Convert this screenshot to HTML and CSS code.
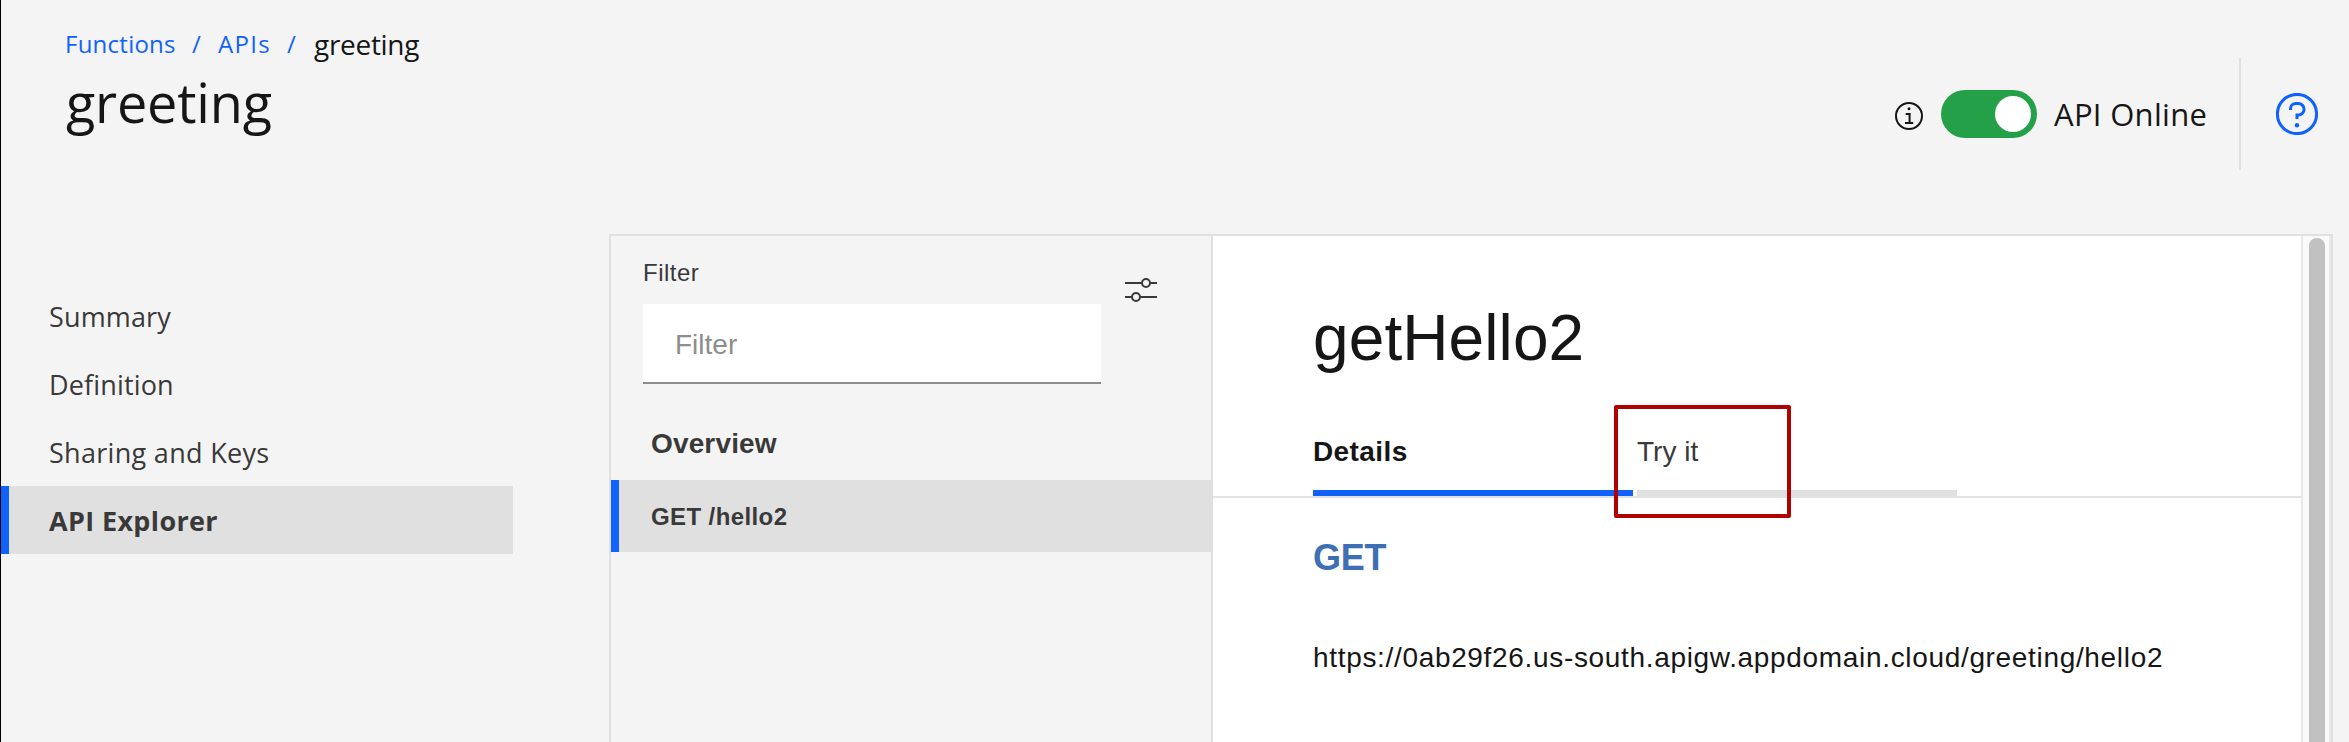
FILE: index.html
```html
<!DOCTYPE html>
<html lang="en">
<head>
<meta charset="utf-8">
<title>greeting</title>
<link rel="stylesheet" href="styles.css">
</head>
<body>
<div class="page">
  <header class="header">
    <div class="heading">
      <nav class="crumbs">
        <a class="crumb">Functions</a><span class="slash">/</span><a class="crumb crumb-apis">APIs</a><span class="slash">/</span><span class="current">greeting</span>
      </nav>
      <h1 class="title">greeting</h1>
    </div>
    <div class="status">
      <svg class="info" viewBox="0 0 28 28"><circle cx="14" cy="14" r="13"/><path d="M10.7 11.9H14.6V20.9M10 20.9H18.2"/><circle class="dot" cx="14" cy="6.7" r="1.5"/></svg>
      <div class="toggle"><span class="knob"></span></div>
      <span class="online">API Online</span>
    </div>
    <div class="help-area">
      <svg class="help" viewBox="0 0 42 42"><circle cx="21" cy="21" r="19.6"/><path d="M14.5 17V15.7A5.2 5.2 0 0 1 19.7 10.5H22.3A5.75 5.75 0 0 1 22.3 22H21V26"/><circle class="dot" cx="21" cy="32.3" r="2.2"/></svg>
    </div>
  </header>
  <main class="main">
    <nav class="sidebar">
      <a class="side-item summary">Summary</a>
      <a class="side-item definition">Definition</a>
      <a class="side-item sharing">Sharing and Keys</a>
      <a class="side-item active">API Explorer</a>
    </nav>
    <section class="explorer">
      <div class="operations">
        <div class="filter-row">
          <div class="filter">
            <label class="filter-label" for="filter">Filter</label>
            <input class="filter-input" id="filter" type="text" placeholder="Filter">
          </div>
          <svg class="settings" viewBox="0 0 32 24"><path d="M0 5H16.5M25.5 5H32M0 19H6.5M15.500 19H32"/><circle cx="21" cy="5" r="4"/><circle cx="11" cy="19" r="4"/></svg>
        </div>
        <a class="overview">Overview</a>
        <a class="operation">GET /hello2</a>
      </div>
      <div class="details">
        <h2 class="name">getHello2</h2>
        <div class="tabs">
          <a class="tab selected">Details</a>
          <a class="tab tryit">Try it<span class="highlight"></span></a>
        </div>
        <div class="method">GET</div>
        <div class="url">https://0ab29f26.us-south.apigw.appdomain.cloud/greeting/hello2</div>
      </div>
      <div class="scrollbar"><div class="thumb"></div></div>
    </section>
  </main>
</div>
</body>
</html>
```
FILE: styles.css
```css
* { box-sizing: border-box; }
body { margin: 0; background: #f4f4f4; color: #161616; font-family: "Open Sans", sans-serif; }
.page { height: 742px; overflow: hidden; border-left: 1px solid #000; display: flex; flex-direction: column; }
.header { height: 234px; display: flex; flex: none; }
.heading { flex: 1; padding: 24px 0 0 64px; }
.crumbs { display: flex; height: 40px; line-height: 40px; font-size: 24px; color: #0f62fe; }
.crumb { width: 127px; white-space: nowrap; letter-spacing: .25px; }
.crumb-apis { width: 69px; margin-left: 17px; letter-spacing: 1.3px; }
.slash { width: 9px; }
.current { margin-left: 18px; font-size: 28px; color: #161616; letter-spacing: -.3px; }
.title { margin: 6px 0 0 1px; font-size: 54px; font-weight: 400; line-height: 64px; letter-spacing: -.2px; }
.status { display: flex; height: 48px; margin-top: 90px; width: 344px; }
.info { width: 28px; height: 28px; margin: 12px 18px 0 0; fill: none; stroke: #161616; stroke-width: 2; }
.info .dot { fill: #161616; stroke: none; }
.toggle { width: 96px; height: 48px; border-radius: 24px; background: #24a148; padding: 6px; display: flex; justify-content: flex-end; }
.knob { width: 36px; height: 36px; border-radius: 50%; background: #fff; }
.online { margin-left: 17px; font-size: 31px; line-height: 48px; white-space: nowrap; letter-spacing: .3px; }
.help-area { width: 110px; height: 112px; margin-top: 58px; border-left: 2px solid #e0e0e0; padding: 35px 0 0 35px; }
.help { display: block; width: 42px; height: 42px; fill: none; stroke: #0f62fe; stroke-width: 3; }
.help .dot { fill: #0f62fe; stroke: none; }
.main { display: flex; flex: 1; min-height: 0; }
.sidebar { width: 512px; padding-top: 48px; flex: none; }
.side-item { display: block; height: 68px; line-height: 70px; padding-left: 48px; font-size: 27px; color: #393939; letter-spacing: .15px; }
.side-item.sharing { letter-spacing: .3px; }
.side-item.active { padding-left: 40px; border-left: 8px solid #0f62fe; background: #e0e0e0; font-weight: 700; letter-spacing: .35px; }
.explorer { display: flex; margin-left: 96px; width: 1724px; border: 2px solid #e0e0e0; border-bottom: 0; font-family: "Liberation Sans", Arial, sans-serif; }
.operations { width: 602px; flex: none; border-right: 2px solid #e0e0e0; color: #393939; }
.filter-row { display: flex; height: 148px; padding: 20px 0 0 32px; }
.filter { width: 458px; }
.filter-label { display: block; height: 48px; font-size: 24px; line-height: 34px; letter-spacing: .5px; }
.filter-input { display: block; width: 458px; height: 80px; border: 0; border-bottom: 2px solid #8d8d8d; padding: 4px 32px 0; background: #fff; font: 28px "Liberation Sans", Arial, sans-serif; }
.filter-input::placeholder { color: #8d8d8d; opacity: 1; }
.settings { width: 32px; height: 24px; margin: 22px 0 0 24px; fill: none; stroke: #393939; stroke-width: 2; }
.overview { display: block; height: 96px; padding: 24px 0 0 40px; font-size: 28px; font-weight: 700; line-height: 72px; letter-spacing: .15px; }
.operation { display: block; height: 72px; border-left: 8px solid #0f62fe; padding-left: 32px; background: #e0e0e0; font-size: 24px; font-weight: 700; line-height: 74px; letter-spacing: .4px; }
.details { width: 1088px; flex: none; background: #fff; padding-top: 62px; }
.name { margin: 0; padding-left: 100px; font-size: 64px; font-weight: 400; line-height: 80px; letter-spacing: .1px; }
.tabs { display: flex; gap: 4px; height: 82px; margin-top: 38px; padding-left: 100px; border-bottom: 2px solid #dfe3e6; }
.tab { width: 320px; height: 80px; padding-top: 18px; line-height: 36px; border-bottom: 6px solid #e0e0e0; font-size: 28px; color: #393939; position: relative; }
.tab.selected { font-weight: 700; color: #161616; border-color: #0f62fe; letter-spacing: .4px; }
.highlight { position: absolute; left: -23px; top: -11px; width: 177px; height: 113px; border: 4px solid #b00000; border-radius: 2px; }
.method { padding: 35px 0 0 100px; height: 98px; font-size: 36px; font-weight: 700; line-height: 50px; color: #3d70b2; letter-spacing: -.3px; }
.url { padding-left: 100px; font-size: 28px; line-height: 124px; white-space: nowrap; letter-spacing: .67px; }
.scrollbar { width: 30px; border-left: 2px solid #e8e8e8; border-right: 2px solid #e8e8e8; background: #fafafa; padding: 2px 0 0 6px; }
.thumb { width: 16px; height: 100%; border-radius: 8px 8px 0 0; background: #c1c1c1; }
```
